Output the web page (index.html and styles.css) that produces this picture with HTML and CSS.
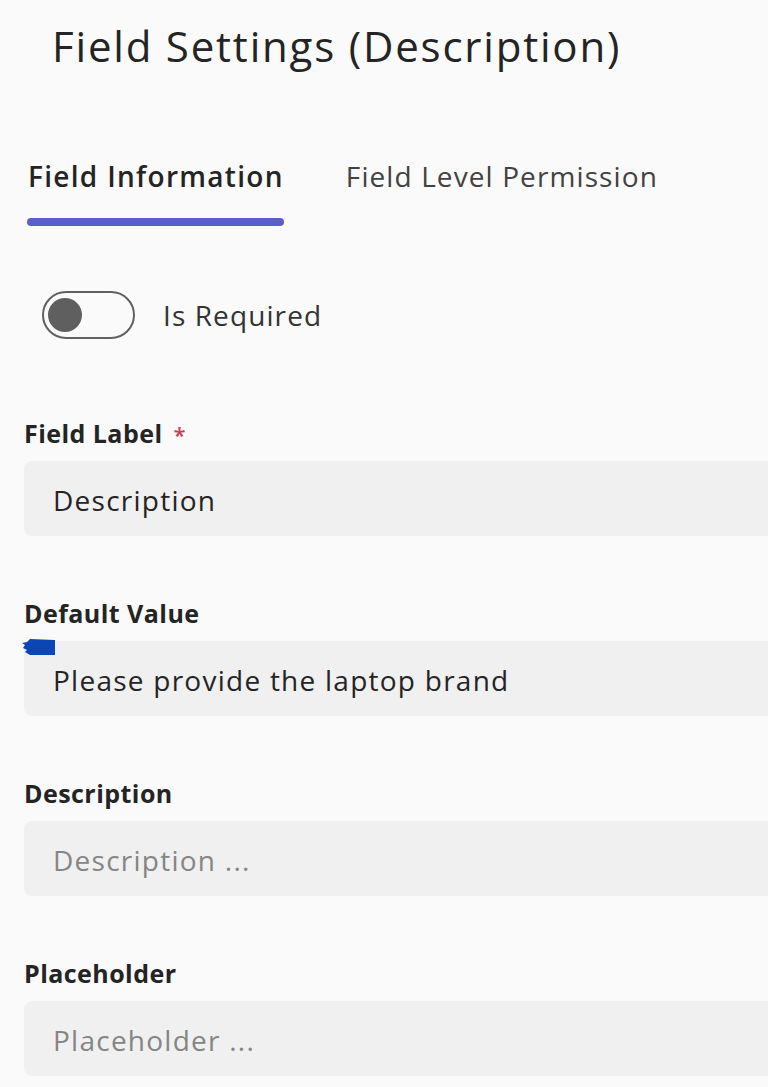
FILE: index.html
```html
<!DOCTYPE html>
<html lang="en">
<head>
<meta charset="utf-8">
<title>Field Settings</title>
<link rel="stylesheet" href="styles.css">
</head>
<body>
<div class="page">
  <h1 class="title">Field Settings (Description)</h1>

  <div class="tabs">
    <div class="tab active">Field Information</div>
    <div class="tab">Field Level Permission</div>
  </div>

  <div class="toggle-row">
    <span class="toggle"><span class="knob"></span></span>
    <span class="toggle-label">Is Required</span>
  </div>

  <div class="field">
    <div class="label">Field Label <span class="req">*</span></div>
    <div class="input">Description</div>
  </div>

  <div class="field">
    <div class="label">Default Value</div>
    <div class="input has-mark">
      <svg class="mark" width="34" height="17" viewBox="0 0 34 17"><polygon points="33,1 8,0 5,3 0,4 3,6 1,9 5,11 3,13 8,16 33,16" fill="#0a47b5"/></svg>
      Please provide the laptop brand
    </div>
  </div>

  <div class="field">
    <div class="label">Description</div>
    <div class="input placeholder">Description ...</div>
  </div>

  <div class="field">
    <div class="label">Placeholder</div>
    <div class="input placeholder">Placeholder ...</div>
  </div>
</div>
</body>
</html>
```

FILE: styles.css
```css
html, body {
  margin: 0;
  padding: 0;
  background: #fafafa;
  overflow: hidden;
}

.page {
  font-family: "Open Sans", "Noto Sans", sans-serif;
  color: #242424;
  height: 1087px;
}

.title {
  margin: 16px 0 0 52px;
  font-size: 42px;
  line-height: 60px;
  font-weight: 500;
  letter-spacing: 1.8px;
  color: #242424;
}

.tabs {
  display: flex;
  gap: 62px;
  margin: 80px 0 0 28px;
}

.tab {
  font-size: 28px;
  line-height: 40px;
  letter-spacing: 1.1px;
  color: #424242;
  padding-bottom: 22px;
  position: relative;
}

.tab.active {
  font-weight: 600;
  letter-spacing: 1.3px;
  color: #242424;
}

.tab.active::after {
  content: "";
  display: block;
  height: 8px;
  border-radius: 4px;
  background: #5b5fc7;
  position: absolute;
  left: -1px;
  right: 0;
  bottom: -8px;
}

.toggle-row {
  display: flex;
  align-items: center;
  gap: 28px;
  margin: 73px 0 0 42px;
}

.toggle {
  width: 85px;
  height: 44px;
  border: 2px solid #616161;
  border-radius: 24px;
  display: flex;
  align-items: center;
  padding-left: 4px;
  box-sizing: content-box;
}

.knob {
  width: 34px;
  height: 34px;
  border-radius: 50%;
  background: #5f5f5f;
}

.toggle-label {
  font-size: 28px;
  letter-spacing: 1.1px;
  color: #333333;
}

.field {
  margin: 0 0 0 24px;
}

.toggle-row + .field {
  margin-top: 78px;
}

.field + .field {
  margin-top: 61px;
}

.label {
  font-size: 25px;
  line-height: 32px;
  height: 32px;
  font-weight: 700;
  letter-spacing: 0.45px;
  color: #242424;
}

.req {
  color: #d13a55;
  font-weight: 600;
  font-size: 22px;
  line-height: 0;
  margin-left: 4px;
}

.input {
  margin-top: 12px;
  height: 75px;
  box-sizing: border-box;
  padding: 3px 0 0 29px;
  line-height: 72px;
  font-size: 28px;
  letter-spacing: 1.25px;
  background: #f0f0f0;
  border-radius: 8px 0 0 8px;
  color: #242424;
  white-space: nowrap;
  position: relative;
}

.input.placeholder {
  color: #858585;
}

.mark {
  position: absolute;
  left: -2px;
  top: -2px;
}
```
